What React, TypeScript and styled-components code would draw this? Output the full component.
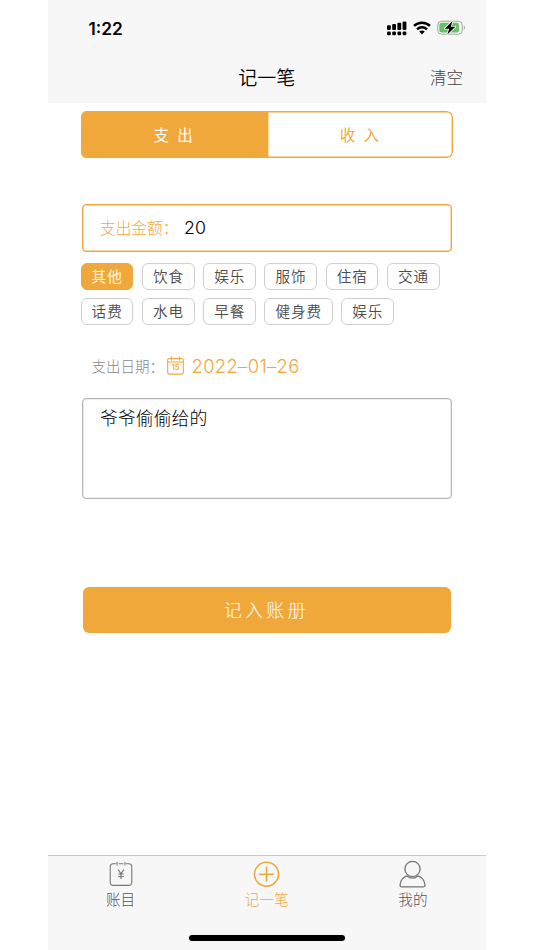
import React, { useState } from 'react';
import styled, { createGlobalStyle } from 'styled-components';

const ORANGE = '#f1a83b';

const GlobalStyle = createGlobalStyle`
  * { box-sizing: border-box; }
  body {
    margin: 0;
    background: #fff;
    font-family: Inter, "Noto Sans CJK SC", sans-serif;
  }
  button, input, textarea { font-family: inherit; margin: 0; padding: 0; }
`;

const Screen = styled.div`
  width: 438.5px;
  height: 950px;
  margin-left: 47.5px;
  display: flex;
  flex-direction: column;
  overflow: hidden;
  background: #fff;
`;

const Header = styled.header`
  height: 102.5px;
  flex: none;
  background: #f7f7f7;
`;

const StatusBar = styled.div`
  height: 56px;
  padding: 0 20px 0 41px;
  display: flex;
  align-items: center;
  justify-content: space-between;
`;

const Clock = styled.span`
  padding-top: 1px;
  font: 600 17.3px/20px Inter, sans-serif;
  color: #000;
`;

const StatusIcons = styled.div`
  display: flex;
  align-items: center;
  gap: 6px;
  svg { display: block; }
`;

const NavBar = styled.div`
  height: 43px;
  display: grid;
  grid-template-columns: 1fr auto 1fr;
  align-items: center;
  padding-right: 23px;
  padding-left: 23px;
`;

const Title = styled.h1`
  grid-column: 2;
  margin: 2px 0 0;
  font-size: 19px;
  line-height: 28px;
  font-weight: 350;
  color: #000;
`;

const ClearButton = styled.button`
  justify-self: end;
  border: 0;
  background: none;
  font-size: 16.5px;
  line-height: 24px;
  font-weight: 300;
  color: #444;
`;

const Main = styled.main`
  flex: 1;
  display: flex;
  flex-direction: column;
  padding: 8px 33px 0 33px;
`;

const Segmented = styled.div`
  flex: none;
  height: 47px;
  display: grid;
  grid-template-columns: 1fr 1fr;
  border-radius: 6px;
  overflow: hidden;
`;

const Segment = styled.button<{ $active: boolean }>`
  border: 0;
  border-radius: ${p => (p.$active ? '0' : '0 6px 6px 0')};
  background: ${p => (p.$active ? ORANGE : '#fff')};
  box-shadow: inset 0 0 0 1.4px ${ORANGE};
  color: ${p => (p.$active ? '#fff' : ORANGE)};
  font-size: 15.5px;
  line-height: 22px;
  font-weight: 400;
  white-space: pre;
  letter-spacing: 1.9px;
  padding: 3px 0 0 1px;
`;

const AmountField = styled.label`
  flex: none;
  height: 47.5px;
  margin: 46.5px 1.5px 0;
  padding-left: 17px;
  display: flex;
  align-items: center;
  border: 1px solid ${ORANGE};
  box-shadow: inset 0 0 0 0.4px ${ORANGE};
  border-radius: 4px;
`;

const AmountLabel = styled.span`
  width: 84px;
  white-space: nowrap;
  font-size: 15.7px;
  font-weight: 300;
  color: ${ORANGE};
`;

const AmountInput = styled.input`
  width: 240px;
  border: 0;
  outline: 0;
  background: none;
  padding-top: 1px;
  font: 300 17.8px/26px Inter, sans-serif;
  color: #000;
`;

const Chips = styled.div`
  flex: none;
  display: flex;
  flex-wrap: wrap;
  gap: 8.5px;
  margin-top: 11.2px;
`;

const Chip = styled.button<{ $active: boolean }>`
  height: 27px;
  padding: 1px 9.6px 0 10.1px;
  border: 1px solid ${p => (p.$active ? ORANGE : '#cfcfcf')};
  border-radius: 6px;
  background: ${p => (p.$active ? ORANGE : '#fff')};
  color: ${p => (p.$active ? '#fff' : '#4c4c4c')};
  font-size: 14.6px;
  line-height: 24px;
  letter-spacing: 0.95px;
  font-weight: 350;
`;

const DateRow = styled.div`
  flex: none;
  height: 28px;
  margin: 26.7px 0 0 11px;
  display: flex;
  align-items: center;
`;

const DateLabel = styled.span`
  width: 75.5px;
  white-space: nowrap;
  font-size: 14.5px;
  font-weight: 300;
  color: #888;
`;

const DateValue = styled.span`
  margin-left: 7.5px;
  font: 300 18.4px/24px Inter, sans-serif;
  letter-spacing: 0.35px;
  color: ${ORANGE};
  white-space: nowrap;
`;

const Note = styled.textarea`
  flex: none;
  display: block;
  height: 101px;
  margin: 18.4px 1.5px 0;
  padding: 6px 17px;
  resize: none;
  border: 1px solid #b8b8b8;
  box-shadow: inset 0 0 0 0.3px #b8b8b8;
  border-radius: 4px;
  outline: 0;
  font-size: 17.9px;
  line-height: 27px;
  font-weight: 300;
  color: #000;
  background: #fff;
`;

const SubmitButton = styled.button`
  flex: none;
  height: 46px;
  margin: 88px 2.5px 0;
  border: 0;
  border-radius: 6px;
  background: ${ORANGE};
  color: #fff;
  font-size: 18px;
  line-height: 26px;
  font-weight: 300;
  letter-spacing: 3.3px;
  padding: 2px 1px 0 0;
`;

const TabBar = styled.nav`
  height: 95px;
  flex: none;
  display: flex;
  flex-direction: column;
  justify-content: space-between;
  border-top: 1px solid #c9c9c9;
  background: #f7f7f7;
`;

const Tabs = styled.div`
  display: grid;
  grid-template-columns: repeat(3, 1fr);
`;

const Tab = styled.button<{ $active: boolean }>`
  border: 0;
  background: none;
  padding-top: 4px;
  display: flex;
  flex-direction: column;
  align-items: center;
  color: ${p => (p.$active ? ORANGE : '#777')};
  font-size: 14.6px;
  line-height: 20px;
  font-weight: 300;
  svg { display: block; margin-bottom: 3px; }
`;

const TabLabel = styled.span<{ $active: boolean }>`
  color: ${p => (p.$active ? ORANGE : '#555')};
`;

const HomeIndicator = styled.div`
  width: 156px;
  height: 6px;
  margin: 0 auto 9px;
  border-radius: 3px;
  background: #000;
`;

const SignalIcon = () => (
  <svg width="20" height="15" viewBox="0 0 20 15">
    {[0, 1, 2, 3].map(i => (
      <g key={i}>
        <rect x={i * 5.2} y={4.3 - i * 1.25} width="3.8" height={4.6 + i * 1.25} rx="1" />
        <rect x={i * 5.2} y="10.4" width="3.8" height="3.8" rx="1.3" />
      </g>
    ))}
  </svg>
);

const WifiIcon = () => (
  <svg width="18" height="14" viewBox="0 0 18 14" fill="none" stroke="#000" strokeWidth="2.5">
    <path d="M1 4.9C5.5.6 12.5.6 17 4.9" />
    <path d="M4 8.3C6.8 5.6 11.2 5.6 14 8.3" />
    <path d="M9 13.4 6.2 10.6C7.8 9.1 10.2 9.1 11.8 10.6Z" fill="#000" stroke="none" />
  </svg>
);

const BatteryIcon = () => (
  <svg width="29" height="16" viewBox="0 0 29 16">
    <rect x=".7" y="1.2" width="24.6" height="13" rx="4" fill="#f7f7f7" stroke="#a4a4a4" />
    <rect x="2.3" y="2.8" width="19.7" height="9.8" rx="2.3" fill="#65c466" />
    <path d="M26.8 5.5c1.6.8 1.6 3.6 0 4.4Z" fill="#a4a4a4" />
    <path d="M15.5.9 7.8 8.7h4.4l-1.9 5.8 8-7.7h-4.5Z" fill="#000" stroke="#f7f7f7" strokeWidth="1.7" paintOrder="stroke" strokeLinejoin="round" />
  </svg>
);

const CalendarIcon = () => (
  <svg width="17" height="19" viewBox="0 0 17 19" fill="none" stroke={ORANGE} strokeWidth="1.1" strokeLinecap="round">
    <rect x=".7" y="2.5" width="15.6" height="15.6" rx="1.7" />
    <path d="M.7 6h15.6M4.5.7v3.5M12.5.7v3.5" />
    <text x="8.5" y="14.2" textAnchor="middle" fontFamily="Inter, sans-serif" fontSize="7.8" fontWeight="600" fill={ORANGE} stroke="none">15</text>
  </svg>
);

const LedgerIcon = () => (
  <svg width="26" height="27" viewBox="0 0 26 27" fill="none" stroke="currentColor" strokeWidth="1.1">
    <path d="M7 3.7H5.2a3 3 0 0 0-3 3v15.7a3 3 0 0 0 3 3h15.6a3 3 0 0 0 3-3V6.7a3 3 0 0 0-3-3H19M10.6 3.7h4.8" />
    <path d="M7 3.7h1.6M17.4 3.7H19M9.1 2v3.6M16.9 2v3.6" strokeWidth=".9" />
    <path d="m10.1 9.7 2.9 4.1 2.9-4.1M13 13.8v5.3M10.2 14h5.6M10.2 16.5h5.6" strokeWidth="1.2" />
  </svg>
);

const AddIcon = () => (
  <svg width="27" height="27" viewBox="0 0 27 27" fill="none" stroke="currentColor" strokeWidth="1.6" strokeLinecap="round">
    <circle cx="13.5" cy="14.2" r="12" />
    <path d="M13.5 7.4v13.6M6.7 14.2h13.6" />
  </svg>
);

const PersonIcon = () => (
  <svg width="27" height="28" viewBox="0 0 27 28" fill="none" stroke="currentColor" strokeWidth="1.3" strokeLinejoin="round">
    <circle cx="13.5" cy="9" r="7.6" />
    <path d="M8.3 16c-4 .4-6.8 4.5-7.2 8.7-.1 1.5.5 2.2 1.8 2.2h21.2c1.3 0 1.9-.7 1.8-2.2-.4-4.2-3.2-8.3-7.2-8.7-2.7 2.8-7.7 2.8-10.4 0Z" />
  </svg>
);

const TabIcon = styled.span`
  height: 30px;
  flex: none;
`;

const categories = ['其他', '饮食', '娱乐', '服饰', '住宿', '交通', '话费', '水电', '早餐', '健身费', '娱乐'];

const tabs = [
  { label: '账目', Icon: LedgerIcon },
  { label: '记一笔', Icon: AddIcon },
  { label: '我的', Icon: PersonIcon },
];

export default function App() {
  const [kind, setKind] = useState(0);
  const [category, setCategory] = useState(0);
  const [amount, setAmount] = useState('20');
  const [note, setNote] = useState('爷爷偷偷给的');
  const [tab, setTab] = useState(1);

  const clear = () => {
    setAmount('');
    setNote('');
  };

  return (
    <>
      <GlobalStyle />
      <Screen>
        <Header>
          <StatusBar>
            <Clock>1:22</Clock>
            <StatusIcons>
              <SignalIcon />
              <WifiIcon />
              <BatteryIcon />
            </StatusIcons>
          </StatusBar>
          <NavBar>
            <Title>记一笔</Title>
            <ClearButton onClick={clear}>清空</ClearButton>
          </NavBar>
        </Header>
        <Main>
          <Segmented>
            {['支 出', '收 入'].map((label, i) => (
              <Segment key={label} $active={kind === i} onClick={() => setKind(i)}>{label}</Segment>
            ))}
          </Segmented>
          <AmountField>
            <AmountLabel>支出金额：</AmountLabel>
            <AmountInput value={amount} onChange={e => setAmount(e.target.value)} />
          </AmountField>
          <Chips>
            {categories.map((label, i) => (
              <Chip key={i} $active={category === i} onClick={() => setCategory(i)}>{label}</Chip>
            ))}
          </Chips>
          <DateRow>
            <DateLabel>支出日期：</DateLabel>
            <CalendarIcon />
            <DateValue>2022–01–26</DateValue>
          </DateRow>
          <Note value={note} onChange={e => setNote(e.target.value)} spellCheck={false} />
          <SubmitButton>记入账册</SubmitButton>
        </Main>
        <TabBar>
          <Tabs>
            {tabs.map(({ label, Icon }, i) => (
              <Tab key={label} $active={tab === i} onClick={() => setTab(i)}>
                <TabIcon><Icon /></TabIcon>
                <TabLabel $active={tab === i}>{label}</TabLabel>
              </Tab>
            ))}
          </Tabs>
          <HomeIndicator />
        </TabBar>
      </Screen>
    </>
  );
}
